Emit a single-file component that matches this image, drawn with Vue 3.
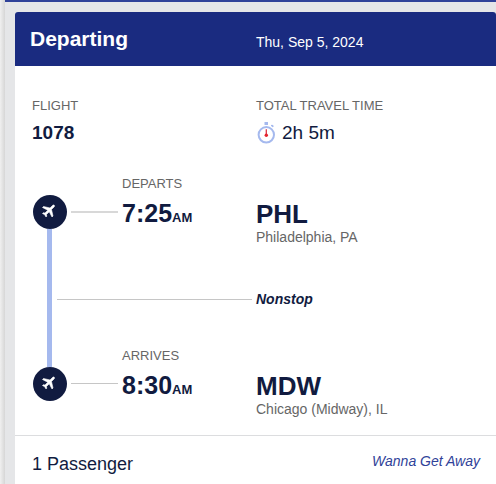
<script setup>
const flight = {
  number: '1078',
  date: 'Thu, Sep 5, 2024',
  duration: '2h 5m',
  stops: 'Nonstop',
  passengers: '1 Passenger',
  fare: 'Wanna Get Away',
}

const stops = [
  { id: 'departs', label: 'Departs', time: '7:25', period: 'AM', code: 'PHL', city: 'Philadelphia, PA' },
  { id: 'arrives', label: 'Arrives', time: '8:30', period: 'AM', code: 'MDW', city: 'Chicago (Midway), IL' },
]

const planePath =
  'M21 16v-2l-8-5V3.5C13 2.67 12.33 2 11.5 2S10 2.67 10 3.5V9l-8 5v2l8-2.5V19l-2 1.5V22l3.5-1 3.5 1v-1.5L13 19v-5.5z'
</script>

<template>
  <main class="page">
    <div class="sheet">
      <article class="card">
        <header class="card-header">
          <h1 class="title">Departing</h1>
          <time class="date" datetime="2024-09-05">{{ flight.date }}</time>
        </header>

        <div class="card-body">
          <section class="summary">
            <div>
              <div class="label">Flight</div>
              <div class="value number">{{ flight.number }}</div>
            </div>
            <div>
              <div class="label">Total travel time</div>
              <div class="value">
                <svg class="stopwatch" viewBox="0 0 20 22" aria-hidden="true">
                  <rect x="8.5" y="0" width="3.5" height="3" fill="#a5b9ee" />
                  <path d="M15 3.4h2v1.6z" fill="#a5b9ee" stroke="#a5b9ee" />
                  <circle cx="10.3" cy="12.8" r="7.7" fill="#fff" stroke="#a5b9ee" stroke-width="2" />
                  <path d="M10.3 7.2v6.3" stroke="#dc3545" stroke-width="1.3" />
                  <circle cx="10.3" cy="13.3" r="1.7" fill="#e5252f" />
                </svg>
                {{ flight.duration }}
              </div>
            </div>
          </section>

          <section class="route">
            <div class="rail" aria-hidden="true">
              <span class="node">
                <svg class="plane" viewBox="0 0 24 24"><path :d="planePath" fill="#fff" stroke="#fff" stroke-width="0.8" transform="rotate(45 12 12)" /></svg>
              </span>
              <span class="track"></span>
              <span class="node">
                <svg class="plane" viewBox="0 0 24 24"><path :d="planePath" fill="#fff" stroke="#fff" stroke-width="0.8" transform="rotate(45 12 12)" /></svg>
              </span>
            </div>

            <template v-for="stop in stops" :key="stop.id">
              <span class="connector" :class="stop.id"></span>
              <div class="when" :class="stop.id">
                <div class="label">{{ stop.label }}</div>
                <div class="clock">{{ stop.time }}<span class="period">{{ stop.period }}</span></div>
              </div>
              <div class="place" :class="stop.id">
                <div class="code">{{ stop.code }}</div>
                <div class="city">{{ stop.city }}</div>
              </div>
            </template>

            <span class="stop-line"></span>
            <div class="stop-count">{{ flight.stops }}</div>
          </section>
        </div>

        <footer class="card-footer">
          <span class="passengers">{{ flight.passengers }}</span>
          <a class="fare" href="#fare">{{ flight.fare }}</a>
        </footer>
      </article>
    </div>
  </main>
</template>

<style>
body {
  margin: 0;
  background: #fff;
}
</style>

<style scoped>
.page {
  box-sizing: border-box;
  min-height: 100vh;
  display: flex;
  padding-left: 5px;
  background: linear-gradient(to right, #f0f0f0, #d6d6d6 5px);
  font-family: Arial, "Liberation Sans", sans-serif;
  color: #111b40;
}

.sheet {
  flex: 1;
  min-width: 0;
  display: flex;
  padding: 10px 0 0 10px;
  border-top: 2px solid #304299;
  background: #e5e6e8;
}

.card {
  flex: 1;
  min-width: 0;
  display: flex;
  flex-direction: column;
  background: #fff;
  border-radius: 3px 3px 0 0;
  overflow: hidden;
}

.card-header {
  display: grid;
  grid-template-columns: 226px 1fr;
  align-items: center;
  height: 54px;
  padding-left: 15px;
  background: #1a2b80;
  color: #fff;
}

.title {
  margin: 0;
  font-size: 21px;
  line-height: 24px;
  font-weight: 700;
}

.date {
  padding-top: 6px;
  font-size: 14px;
  line-height: 16px;
}

.card-body {
  padding: 32px 16px 15px 17px;
}

.summary {
  display: grid;
  grid-template-columns: 224px 1fr;
  margin-bottom: 31px;
}

.label {
  font-size: 13px;
  line-height: 16px;
  text-transform: uppercase;
  color: #666;
}

.value {
  display: flex;
  align-items: center;
  gap: 6px;
  height: 24px;
  margin-top: 7px;
  font-size: 19px;
  line-height: 24px;
}

.number {
  font-weight: 700;
}

.stopwatch {
  width: 20px;
  height: 22px;
}

.route {
  display: grid;
  grid-template-columns: 35px 55px 134px 1fr;
  grid-template-rows: 74px 98px 72px;
}

.rail {
  grid-column: 1;
  grid-row: 1 / 4;
  display: flex;
  flex-direction: column;
  align-items: center;
  padding: 19px 0;
}

.node {
  display: flex;
  align-items: center;
  justify-content: center;
  width: 34px;
  height: 34px;
  border-radius: 50%;
  background: #111b40;
}

.plane {
  width: 17px;
  height: 17px;
  margin-bottom: 3px;
}

.track {
  flex: 1;
  width: 5px;
  background: #a5b9ee;
}

.departs {
  grid-row: 1;
}

.arrives {
  grid-row: 3;
}

.connector {
  grid-column: 2;
  height: 1px;
  margin: 35px 4px 0;
  background: #c6c6c6;
}

.connector.departs {
  height: 2px;
  background: #d8d8d8;
}

.when {
  grid-column: 3;
}

.clock {
  margin-top: 6px;
  font-size: 25px;
  line-height: 30px;
  font-weight: 700;
}

.period {
  font-size: 13px;
}

.place {
  grid-column: 4;
  padding-top: 23px;
}

.code {
  font-size: 26px;
  line-height: 30px;
  font-weight: 700;
}

.city {
  font-size: 14px;
  line-height: 16px;
  color: #666;
}

.stop-line {
  grid-column: 1 / 4;
  grid-row: 2;
  align-self: center;
  height: 1px;
  margin: 0 4px 0 25px;
  background: #c6c6c6;
}

.stop-count {
  grid-column: 4;
  grid-row: 2;
  align-self: center;
  font-size: 14px;
  line-height: 16px;
  font-style: italic;
  font-weight: 700;
}

.card-footer {
  display: flex;
  justify-content: space-between;
  align-items: flex-start;
  padding: 16px 16px 0 17px;
  border-top: 1px solid #dcdddf;
}

.passengers {
  font-size: 18px;
  line-height: 24px;
}

.fare {
  font-size: 14px;
  line-height: 18px;
  font-style: italic;
  color: #304299;
  text-decoration: none;
}
</style>
